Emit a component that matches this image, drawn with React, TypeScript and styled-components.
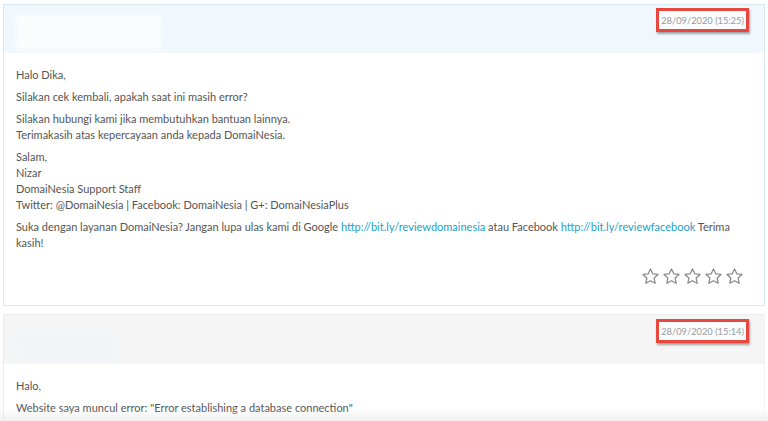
import styled, { createGlobalStyle } from 'styled-components';

const GlobalStyle = createGlobalStyle`
  html, body {
    margin: 0;
    padding: 0;
    background: #ffffff;
    overflow: hidden;
  }
  body {
    font-family: Lato, "Open Sans", sans-serif;
    color: #555;
  }
`;

const Page = styled.div`
  width: 768px;
  height: 421px;
  padding: 4px 3px 0 3px;
  box-sizing: border-box;
  display: flex;
  flex-direction: column;
  gap: 8px;
  position: relative;
  overflow: hidden;
`;

const Card = styled.div<{ $staff?: boolean }>`
  border: 1px solid ${({ $staff }) => ($staff ? '#d5e9f5' : '#ececec')};
  border-right-color: ${({ $staff }) => ($staff ? '#d5e9f5' : '#f3f3f3')};
  background: #fff;
  display: flex;
  flex-direction: column;
  flex-shrink: 0;
`;

const Header = styled.div<{ $staff?: boolean }>`
  height: ${({ $staff }) => ($staff ? '48px' : '49px')};
  background: ${({ $staff }) => ($staff ? '#f0f8fe' : '#f5f5f5')};
  display: flex;
  justify-content: space-between;
  align-items: flex-start;
  padding: ${({ $staff }) => ($staff ? '3px' : '4px')} 15px 0 9px;
  box-sizing: border-box;
  overflow: hidden;
`;

const BlurName = styled.div<{ $staff?: boolean }>`
  width: ${({ $staff }) => ($staff ? '146px' : '104px')};
  height: ${({ $staff }) => ($staff ? '36px' : '32px')};
  margin-top: ${({ $staff }) => ($staff ? '6px' : '14px')};
  margin-left: ${({ $staff }) => ($staff ? '3px' : '0')};
  background: ${({ $staff }) => ($staff ? '#fbfcfd' : '#f1f5f8')};
  filter: blur(2px);
`;

const DateBox = styled.div`
  border: 3px solid #e8473e;
  box-shadow: 1px 2px 2px rgba(0, 0, 0, 0.35);
  background: #fafcfd;
  padding: 0 2px;
  height: 24px;
  box-sizing: border-box;
  display: flex;
  align-items: center;
  font-size: 9.3px;
  color: #9a9a9a;
  white-space: nowrap;
`;

const Body = styled.div`
  padding: 14px 12px 0 12px;
  font-size: 11px;
  line-height: 16px;
  color: #555;
`;

const Para = styled.p`
  margin: 0 0 6px 0;
`;

const Link = styled.a`
  color: #21a1cb;
  text-decoration: none;
`;

const Rating = styled.div`
  display: flex;
  justify-content: flex-end;
  gap: 2px;
  padding: 10px 20px 19px 0;
`;

const Fade = styled.div`
  position: absolute;
  left: 0;
  right: 0;
  bottom: 0;
  height: 12px;
  background: linear-gradient(to bottom, rgba(240, 240, 240, 0), rgba(232, 232, 232, 0.7));
  pointer-events: none;
`;

const Star = () => (
  <svg width="19" height="19" viewBox="0 0 24 24" fill="none" stroke="#8a8a8a" strokeWidth="1.6" strokeLinejoin="round">
    <path d="M12 2.5l2.9 6.1 6.6.8-4.9 4.6 1.3 6.6L12 17.3l-5.9 3.3 1.3-6.6-4.9-4.6 6.6-.8z" />
  </svg>
);

export default function App() {
  return (
    <>
      <GlobalStyle />
      <Page>
        <Card $staff>
          <Header $staff>
            <BlurName $staff />
            <DateBox>28/09/2020 (15:25)</DateBox>
          </Header>
          <Body>
            <Para>Halo Dika,</Para>
            <Para>Silakan cek kembali, apakah saat ini masih error?</Para>
            <Para>
              Silakan hubungi kami jika membutuhkan bantuan lainnya.
              <br />
              Terimakasih atas kepercayaan anda kepada DomaiNesia.
            </Para>
            <Para>
              Salam,
              <br />
              Nizar
              <br />
              DomaiNesia Support Staff
              <br />
              Twitter: @DomaiNesia | Facebook: DomaiNesia | G+: DomaiNesiaPlus
            </Para>
            <Para>
              Suka dengan layanan DomaiNesia? Jangan lupa ulas kami di Google{' '}
              <Link href="#">http://bit.ly/reviewdomainesia</Link> atau Facebook{' '}
              <Link href="#">http://bit.ly/reviewfacebook</Link> Terima kasih!
            </Para>
          </Body>
          <Rating>
            {[0, 1, 2, 3, 4].map((i) => (
              <Star key={i} />
            ))}
          </Rating>
        </Card>
        <Card>
          <Header>
            <BlurName />
            <DateBox>28/09/2020 (15:14)</DateBox>
          </Header>
          <Body>
            <Para>Halo,</Para>
            <Para>Website saya muncul error: "Error establishing a database connection"</Para>
          </Body>
        </Card>
        <Fade />
      </Page>
    </>
  );
}
